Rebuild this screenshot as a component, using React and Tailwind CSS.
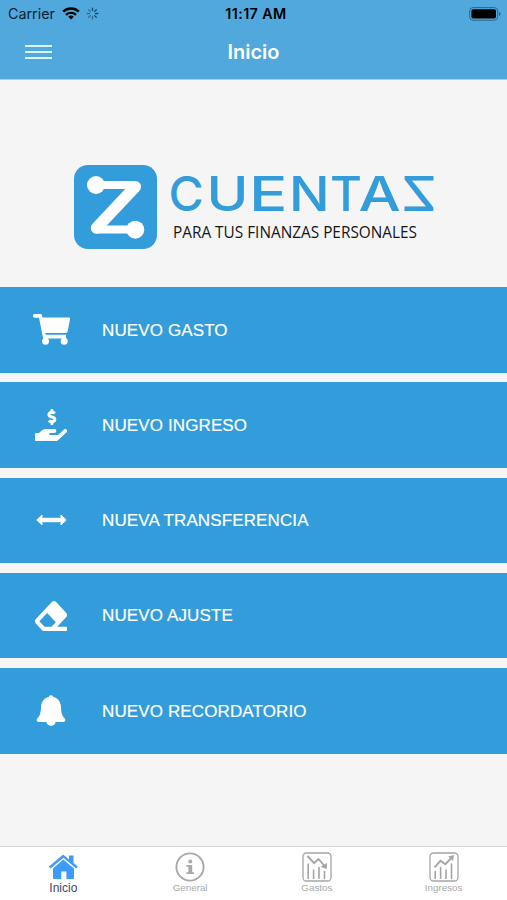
import React from "react";
import { FaEraser, FaHandHoldingUsd } from "react-icons/fa";

function CartIcon() {
  return (
    <svg className="w-[38px] h-8 ml-[1px]" viewBox="0 0 38 32" fill="currentColor">
      <path d="M1.8 0H7.5Q8.7 0 9 1.4L9.4 3.4H35.6Q37.4 3.4 37.1 5L34.6 17.6Q34.3 19 32.8 19H12.2L12.6 20.8H33V24.6H11.6Q10.2 24.6 9.9 23.2L6 3.7H1.8A1.8 1.8 0 0 1 1.8 0Z" />
      <circle cx="12.5" cy="27.2" r="3.5" />
      <circle cx="31.2" cy="27.2" r="3.5" />
    </svg>
  );
}

function ArrowsIcon() {
  return (
    <svg className="w-[31px] h-3" viewBox="0 0 31 12" fill="currentColor" stroke="currentColor" strokeWidth="1" strokeLinejoin="round">
      <path d="M.8 6L6 1V4.3H25V1L30.2 6L25 11V7.7H6V11Z" />
    </svg>
  );
}

function BellIcon() {
  return (
    <svg className="w-[30px] h-8" viewBox="0 0 30 32" fill="currentColor">
      <path d="M15 .3A2.4 2.4 0 0 1 17.4 2.1C22 3.3 24.8 7 25 12C25.2 18 26 21 28.8 23.6Q30.2 26.2 27.7 26.9H19.6A4.7 4.7 0 0 1 10.4 26.9H2.3Q-.2 26.2 1.2 23.6C4 21 4.8 18 5 12C5.2 7 8 3.3 12.6 2.1A2.4 2.4 0 0 1 15 .3Z" />
    </svg>
  );
}

function HomeIcon() {
  return (
    <svg className="w-[30px] h-[26px]" viewBox="0 0 30 26" fill="#3f9bfb">
      <path d="M15.3 5.4L26 14.6V24.2Q26 25 25.2 25H18.4V17.4H13.2V25H5.8Q5 25 5 24.2V14.6Z" />
      <path d="M15.4 .8L21 5.4V1.6H25.5V9L29.8 12.6L28.2 14.4L15.4 3.8L2.6 14.4L1 12.6L14.3 1.3Q15 .6 15.4 .8Z" />
    </svg>
  );
}

function InfoIcon() {
  return (
    <svg className="w-[30px] h-[30px]" viewBox="0 0 30 30" fill="#a9a9a9">
      <circle cx="15" cy="15" r="13.6" fill="none" stroke="#a9a9a9" strokeWidth="1.9" />
      <circle cx="15.3" cy="9.6" r="2" />
      <path d="M11.4 13H17.2V20.2H19V22H11.3V20.2H13.4V14.8H11.4Z" />
    </svg>
  );
}

function ChartIcon({ up }) {
  return (
    <svg className="w-[30px] h-[30px]" viewBox="0 0 30 30" fill="none" stroke="#a5a5a5">
      <rect x="1" y="1" width="28" height="28" rx="3.5" strokeWidth="1.3" />
      {up ? (
        <>
          <path d="M6.2 27V19M11.6 27V15M17 27V17.5M22.5 27V11.5" strokeWidth="1.6" />
          <path d="M5.5 15.3L11.5 8.8L16.4 12.2L23 5.2" strokeWidth="1.9" />
          <path d="M19.2 4.6L25 3L24 9Z" fill="#a5a5a5" stroke="none" />
        </>
      ) : (
        <>
          <path d="M6.2 27V11.5M11.6 27V17.5M17 27V15M22.5 27V19" strokeWidth="1.6" />
          <path d="M5.5 4L12 11.2L16.5 7L22.5 14" strokeWidth="1.9" />
          <path d="M18.8 15L25 10.8L24.8 17Z" fill="#a5a5a5" stroke="none" />
        </>
      )}
    </svg>
  );
}

const ACTIONS = [
  { label: "NUEVO GASTO", icon: <CartIcon /> },
  { label: "NUEVO INGRESO", icon: <FaHandHoldingUsd className="w-8 h-8" preserveAspectRatio="none" /> },
  { label: "NUEVA TRANSFERENCIA", icon: <ArrowsIcon /> },
  { label: "NUEVO AJUSTE", icon: <FaEraser className="w-8 h-[34px]" preserveAspectRatio="none" /> },
  { label: "NUEVO RECORDATORIO", icon: <BellIcon /> },
];

const TABS = [
  { label: "Inicio", icon: <HomeIcon />, active: true },
  { label: "General", icon: <InfoIcon /> },
  { label: "Gastos", icon: <ChartIcon /> },
  { label: "Ingresos", icon: <ChartIcon up /> },
];

const SPOKES = [0, 45, 90, 135, 180, 225, 270, 315];

// each letter of the wordmark is stretched on its own
const WORDMARK = [
  { char: "C", x: 95.5, scale: 1 },
  { char: "U", x: 133.5, scale: 1.18 },
  { char: "E", x: 176, scale: 1.33 },
  { char: "N", x: 216, scale: 1.12 },
  { char: "T", x: 257, scale: 1.02 },
  { char: "A", x: 285.5, scale: 1.24 },
  { char: "Z", x: 363.5, scale: -1.15 },
];

function StatusBar() {
  return (
    <div className="grid grid-cols-3 items-center h-[27px] pl-2 pr-[6px] font-['Inter',sans-serif] text-[#0b2233]">
      <div className="flex items-center">
        <span className="text-[14.3px] w-[54px] whitespace-nowrap">Carrier</span>
        <svg className="w-[18px] h-[13px]" viewBox="0 0 18 13" fill="none" stroke="#000" strokeWidth="2.4">
          <path d="M1.2 4.7C5.6 .5 12.4 .5 16.8 4.7" />
          <path d="M4 7.9C6.9 5.2 11.1 5.2 14 7.9" />
          <path d="M9 12.6L6.2 9.8Q9 7.4 11.8 9.8Z" fill="#000" stroke="none" />
        </svg>
        <svg className="w-[13px] h-[13px] ml-[6px]" viewBox="-6.5 -6.5 13 13" stroke="#16405c" strokeWidth="1.3" strokeLinecap="round">
          {SPOKES.map((angle) => (
            <path key={angle} d="M0 -3V-5.4" transform={`rotate(${angle})`} opacity={angle < 180 ? 0.9 : 0.55} />
          ))}
        </svg>
      </div>
      <div className="text-center text-[14.3px] tracking-[0.4px] pl-[3px] font-semibold text-black whitespace-nowrap">11:17 AM</div>
      <svg className="w-8 h-[14px] justify-self-end" viewBox="0 0 32 14">
        <rect x=".7" y=".6" width="28" height="12.6" rx="3.4" fill="none" stroke="#2f6486" strokeWidth="1" />
        <rect x="2.4" y="2.3" width="24.6" height="9.2" rx="1.8" fill="#000" />
        <path d="M30 4.8Q31.6 5.4 31.6 6.9T30 9Z" fill="#2f6486" />
      </svg>
    </div>
  );
}

function Logo() {
  return (
    <svg className="w-[400px] h-[100px]" viewBox="0 0 400 100">
      <rect x="1" y="1" width="83" height="84" rx="14" fill="#339cda" />
      <path d="M23 21H63M23 65.5H62" stroke="#fff" strokeWidth="8" />
      <path d="M62.3 22.7L23.5 64" stroke="#fff" strokeWidth="11.5" strokeLinecap="round" />
      <circle cx="23" cy="21" r="9" fill="#fff" />
      <circle cx="62.3" cy="65.7" r="9" fill="#fff" />
      <g fill="#339cda" className="font-['Inter',sans-serif] text-[48px] font-medium">
        {WORDMARK.map(({ char, x, scale }) => (
          <text key={char} transform={`translate(${x} 46.8) scale(${scale} 1)`}>
            {char}
          </text>
        ))}
      </g>
      <text x="100" y="74" fill="#161616" textLength="244" lengthAdjust="spacingAndGlyphs" className="font-['Open_Sans',sans-serif] text-[16.2px]">
        PARA TUS FINANZAS PERSONALES
      </text>
    </svg>
  );
}

export default function App() {
  return (
    <div className="flex flex-col w-full h-[900px] overflow-hidden bg-[#f5f5f5] font-['Liberation_Sans',sans-serif]">
      <header className="h-20 bg-[#50a8dd] border-b border-[#a5d0ec]">
        <StatusBar />
        <div className="grid grid-cols-3 items-center h-[50px] px-[25px]">
          <div className="flex flex-col gap-1 w-[27px]">
            <span className="h-[2px] bg-[#d9f6ff]" />
            <span className="h-[2px] bg-[#d9f6ff]" />
            <span className="h-[2px] bg-[#d9f6ff]" />
          </div>
          <h1 className="text-center text-white font-['Inter',sans-serif] text-[20px] font-semibold">Inicio</h1>
        </div>
      </header>

      <main className="flex-1">
        <div className="flex items-start h-[207px] pl-[73px] pt-[84px]">
          <Logo />
        </div>
        <div className="flex flex-col gap-[9.8px]">
          {ACTIONS.map(({ label, icon }) => (
            <button key={label} className="flex items-center h-[85.5px] w-full bg-[#339cda] text-white">
              <span className="flex justify-center w-[102px]">{icon}</span>
              <span className="pt-px text-[17px] tracking-[0.12px] [-webkit-text-stroke:0.2px_white]">{label}</span>
            </button>
          ))}
        </div>
      </main>

      <nav className="grid grid-cols-4 h-[54px] bg-white border-t border-[#d5d5d5]">
        {TABS.map(({ label, icon, active }) => (
          <div key={label} className="flex flex-col items-center pt-[5px]">
            <span className="flex items-center h-[30px]">{icon}</span>
            <span className={active ? "text-[12px] leading-[13px] text-[#3c4665]" : "text-[9.8px] leading-[11px] text-[#a8a8a8]"}>
              {label}
            </span>
          </div>
        ))}
      </nav>
    </div>
  );
}
